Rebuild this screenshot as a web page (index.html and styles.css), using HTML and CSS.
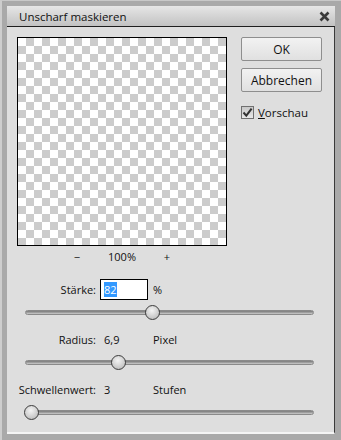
FILE: index.html
```html
<!DOCTYPE html>
<html lang="de">
<head>
    <meta charset="UTF-8">
    <title>Unscharf maskieren</title>
    <link rel="stylesheet" href="styles.css">
</head>
<body>
    <div class="frame">
        <div class="titlebar">
            <span class="title">Unscharf maskieren</span>
            <svg class="close" width="11" height="11" viewBox="0 0 11 11"><path d="M1.5 1.5 L9.5 9.5 M9.5 1.5 L1.5 9.5" stroke="#3a3a3a" stroke-width="2.6"/></svg>
        </div>
        <div class="content">
            <div class="top">
                <div class="left">
                    <!-- Preview -->
                    <div class="preview"></div>
                    <div class="zoom-row">
                        <span class="zoom-btn">&minus;</span>
                        <span class="zoom-value">100%</span>
                        <span class="zoom-btn">+</span>
                    </div>
                </div>
                <div class="side">
                    <button class="btn">OK</button>
                    <button class="btn">Abbrechen</button>
                    <label class="check">
                        <span class="box">
                            <svg width="11" height="11" viewBox="0 0 11 11"><path d="M1.5 5.5 L4.3 8.6 L9.6 1.6" fill="none" stroke="#333" stroke-width="2"/></svg>
                        </span>
                        <span><u>V</u>orschau</span>
                    </label>
                </div>
            </div>

            <!-- Stärke -->
            <div class="param">
                <span class="label">Stärke:</span>
                <span class="value"><span class="input"><span class="sel">82</span></span></span>
                <span class="unit">%</span>
            </div>
            <div class="slider"><div class="track"><span class="thumb" style="left: 44%"></span></div></div>

            <!-- Radius -->
            <div class="param">
                <span class="label">Radius:</span>
                <span class="value text">6,9</span>
                <span class="unit">Pixel</span>
            </div>
            <div class="slider"><div class="track"><span class="thumb" style="left: 32%"></span></div></div>

            <!-- Schwellenwert -->
            <div class="param">
                <span class="label">Schwellenwert:</span>
                <span class="value text">3</span>
                <span class="unit">Stufen</span>
            </div>
            <div class="slider"><div class="track"><span class="thumb" style="left: 1.7%"></span></div></div>
        </div>
    </div>
</body>
</html>
```

FILE: styles.css
```css
* {
    box-sizing: border-box;
}

body {
    margin: 0;
    font-family: "Open Sans", "DejaVu Sans", sans-serif;
    font-size: 11px;
    color: #111;
}

.frame {
    width: 341px;
    height: 440px;
    background-color: #a9a9a9;
    border-left: 2px solid #cdcdcd;
    border-top: 1px solid #c8c8c8;
    padding: 5px 6px 6px 5px;
    display: flex;
    flex-direction: column;
}

.titlebar {
    height: 21px;
    background: linear-gradient(#e6e6e6, #c2c2c2);
    border-bottom: 1px solid #1e1e1e;
    display: flex;
    align-items: center;
    justify-content: space-between;
    padding: 0 5px 0 12px;
}

.title {
    font-size: 11.5px;
    color: #111;
}

.content {
    flex: 1;
    background-color: #dedede;
    border-right: 1px solid #3a3a3a;
    border-bottom: 2px solid #f4f4f4;
    padding: 10px 0 0 0;
}

.top {
    display: flex;
    padding-left: 10px;
}

.left {
    width: 210px;
}

.preview {
    width: 210px;
    height: 209px;
    border: 1px solid #000;
    background-color: #fff;
    background-image: conic-gradient(#cccccc 25%, #ffffff 0 50%, #cccccc 0 75%, #ffffff 0);
    background-size: 16px 16px;
    background-position: 0 0;
}

.zoom-row {
    display: flex;
    justify-content: center;
    align-items: center;
    margin-top: 2px;
    height: 17px;
}

.zoom-btn {
    width: 58px;
    text-align: center;
}

.zoom-value {
    width: 32px;
    text-align: center;
}

.side {
    margin-left: 14px;
    display: flex;
    flex-direction: column;
    gap: 7px;
}

.btn {
    width: 81px;
    height: 24px;
    font-family: inherit;
    font-size: 12px;
    color: #111;
    background: linear-gradient(#f2f2f2, #e0e0e0);
    border: 1px solid #8e8e8e;
    border-radius: 2px;
    padding: 0;
}

.check {
    display: flex;
    align-items: center;
    gap: 4px;
    margin-top: 6px;
    font-size: 11.5px;
}

.box {
    width: 13px;
    height: 13px;
    border: 1px solid #707070;
    background: linear-gradient(#c8c8c8, #e8e8e8);
    display: flex;
    align-items: center;
    justify-content: center;
}

.param {
    display: grid;
    grid-template-columns: 93px 52px auto;
    align-items: center;
    height: 20px;
    margin-top: 9px;
}

.top + .param {
    margin-top: 14px;
}

.label {
    text-align: right;
    padding-right: 4px;
}

.value.text {
    padding-left: 4px;
}

.input {
    display: block;
    width: 48px;
    height: 21px;
    border: 1px solid #000;
    background: #fff;
    padding: 2px 3px;
    line-height: 15px;
}

.sel {
    background-color: #3399ff;
    color: #fff;
}

.unit {
    padding-left: 1px;
}

.slider {
    padding: 0 20px 0 18px;
    height: 16px;
    margin-top: 5px;
    display: flex;
    align-items: center;
}

.track {
    position: relative;
    flex: 1;
    height: 5px;
    border-radius: 3px;
    background: linear-gradient(#7a7a7a, #a6a6a6 60%, #cfcfcf);
    border: 1px solid #8a8a8a;
}

.thumb {
    position: absolute;
    top: -6px;
    width: 15px;
    height: 15px;
    margin-left: -7px;
    border-radius: 50%;
    border: 1px solid #3c3c3c;
    background: radial-gradient(circle at 45% 35%, #f4f4f4, #c6c6c6 70%, #a8a8a8);
}
```
